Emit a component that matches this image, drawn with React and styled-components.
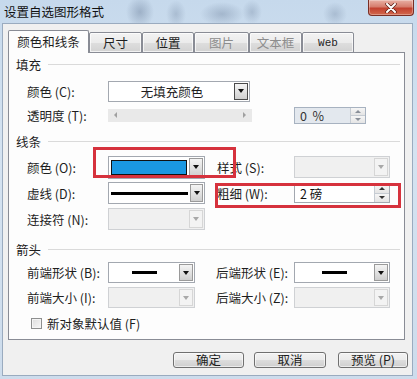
import styled, { createGlobalStyle } from 'styled-components';

const GlobalStyle = createGlobalStyle`
  html, body { margin: 0; padding: 0; }
  body {
    font-family: "Noto Sans CJK SC", "Noto Sans", sans-serif;
    font-size: 12px;
    color: #1e1e1e;
  }
  * { box-sizing: border-box; }
`;

const Window = styled.div`
  position: relative;
  width: 417px;
  height: 379px;
  display: flex;
  flex-direction: column;
  padding: 0 4px 3px 2px;
  background:
    radial-gradient(ellipse 14px 16px at 140px 12px, rgba(80, 100, 130, 0.35), transparent),
    radial-gradient(ellipse 10px 14px at 176px 14px, rgba(80, 100, 130, 0.25), transparent),
    radial-gradient(ellipse 22px 12px at 222px 14px, rgba(80, 100, 130, 0.3), transparent),
    radial-gradient(ellipse 10px 12px at 252px 12px, rgba(80, 100, 130, 0.25), transparent),
    radial-gradient(ellipse 12px 12px at 335px 14px, rgba(80, 100, 130, 0.25), transparent),
    linear-gradient(180deg, #c6d9ec 0%, #d5e3f1 40%, #cddcec 100%);
`;

const TitleBar = styled.div`
  height: 23px;
  display: flex;
  justify-content: space-between;
  align-items: flex-start;
`;

const Title = styled.div`
  padding-left: 2px;
  line-height: 23px;
  font-size: 12.5px;
  color: #111;
`;

const CloseBtn = styled.div`
  width: 46px;
  height: 16px;
  margin-right: -1px;
  display: flex;
  align-items: center;
  justify-content: center;
  border: 1px solid #7a2e24;
  border-top: none;
  border-radius: 0 0 4px 4px;
  background: linear-gradient(180deg, #e8b0a4 0%, #d67d6d 45%, #c2412f 55%, #d2694e 100%);
  box-shadow: inset 0 0 0 1px rgba(255, 255, 255, 0.3);
`;

const Client = styled.div`
  flex: 1;
  display: flex;
  flex-direction: column;
  padding: 6px 7px 0 5px;
  background: #f0f0f0;
  border: 1px solid #9aabbf;
`;

const TabRow = styled.div`
  position: relative;
  z-index: 1;
  height: 23px;
  margin-bottom: -1px;
  display: flex;
  align-items: flex-end;
`;

const Tab = styled.div`
  width: ${(p) => p.$w}px;
  height: ${(p) => (p.$active ? 23 : 21)}px;
  display: flex;
  align-items: center;
  justify-content: center;
  padding-bottom: ${(p) => (p.$active ? 2 : 0)}px;
  border: 1px solid #898c95;
  border-bottom: ${(p) => (p.$active ? 'none' : '1px solid #898c95')};
  border-radius: 2px 2px 0 0;
  background: ${(p) =>
    p.$active ? '#fdfdfd' : 'linear-gradient(180deg, #f3f3f3 0%, #ebebeb 50%, #dedede 51%, #d2d2d2 100%)'};
  box-shadow: ${(p) => (p.$active ? 'none' : 'inset 0 0 0 1px rgba(255,255,255,0.7)')};
  color: ${(p) => (p.$disabled ? '#8d8d8d' : '#1e1e1e')};
  font-family: ${(p) => (p.$mono ? '"Liberation Mono", monospace' : 'inherit')};
  font-size: ${(p) => (p.$mono ? '11px' : '12.5px')};
`;

const Panel = styled.div`
  height: 288px;
  border: 1px solid #898c95;
  background: #fdfdfd;
  padding: 0 4px 0 7px;
`;

const SectionHead = styled.div`
  height: 14px;
  margin-top: ${(p) => p.$top}px;
  display: flex;
  align-items: center;
  font-size: 12.5px;
`;

const HeadLine = styled.div`
  flex: 1;
  height: 1px;
  margin-left: 7px;
  background: #dadada;
`;

const Rows = styled.div`
  margin-top: ${(p) => p.$top}px;
  padding-left: 11px;
`;

const Row = styled.div`
  height: ${(p) => p.$h}px;
  display: flex;
  align-items: center;
`;

const Label = styled.div`
  width: ${(p) => p.$w}px;
  margin-left: ${(p) => p.$ml || 0}px;
  flex-shrink: 0;
  white-space: nowrap;
  font-size: 12.5px;
`;

const Combo = styled.div`
  width: ${(p) => p.$w}px;
  height: ${(p) => p.$h || 22}px;
  flex-shrink: 0;
  display: flex;
  padding: 1px;
  border: 1px solid ${(p) => (p.$disabled ? '#cfd1d4' : '#a3a8b0')};
  background: ${(p) => (p.$disabled ? '#f0f0f0' : '#fff')};
`;

const ComboField = styled.div`
  flex: 1;
  display: flex;
  align-items: center;
  justify-content: center;
  padding: ${(p) => (p.$pad ? '2px 2px 2px 1px' : '0')};
  font-size: 12.5px;
`;

const ComboArrow = styled.div`
  width: 14px;
  display: flex;
  align-items: center;
  justify-content: center;
  border: 1px solid ${(p) => (p.$dark ? '#4a4a4a' : p.$disabled ? '#d6d6d6' : '#9a9a9a')};
  background: ${(p) =>
    p.$disabled ? '#f3f3f3' : 'linear-gradient(180deg, #f4f4f4 0%, #e2e2e2 50%, #cfcfcf 100%)'};
  &::after {
    content: '';
    border-left: 3.5px solid transparent;
    border-right: 3.5px solid transparent;
    border-top: 4px solid ${(p) => (p.$disabled ? '#a8a8a8' : '#111')};
  }
`;

const Swatch = styled.div`
  width: 100%;
  height: 100%;
  background: #1a98e2;
  border: 1px solid #111;
`;

const LineSample = styled.div`
  width: ${(p) => p.$w}px;
  height: 3px;
  background: #000;
`;

const Slider = styled.div`
  width: 144px;
  height: 13px;
  flex-shrink: 0;
  display: flex;
  align-items: center;
  justify-content: space-between;
  padding: 0 6px;
  background: #e9e9e9;
  &::before,
  &::after {
    content: '';
    border-top: 3px solid transparent;
    border-bottom: 3px solid transparent;
  }
  &::before { border-right: 3px solid #a0a0a0; }
  &::after { border-left: 3px solid #a0a0a0; }
`;

const Spin = styled.div`
  width: ${(p) => p.$w}px;
  height: ${(p) => p.$h}px;
  margin-left: ${(p) => p.$ml || 0}px;
  flex-shrink: 0;
  display: flex;
  border: 1px solid ${(p) => (p.$muted ? '#a7b2c0' : '#a3a8b0')};
  background: ${(p) => (p.$muted ? '#e3e8ee' : '#fff')};
`;

const SpinText = styled.div`
  flex: 1;
  display: flex;
  align-items: center;
  padding-left: 5px;
  font-size: 12.5px;
  white-space: pre;
  color: ${(p) => (p.$muted ? '#333' : '#111')};
`;

const SpinBtns = styled.div`
  width: 15px;
  display: flex;
  flex-direction: column;
  border-left: 1px solid #c6ccd3;
`;

const SpinBtn = styled.div`
  flex: 1;
  display: flex;
  align-items: center;
  justify-content: center;
  background: linear-gradient(180deg, #f6f6f6, #e4e4e4);
  & + & { border-top: 1px solid #c6ccd3; }
  &::after {
    content: '';
    border-left: 3px solid transparent;
    border-right: 3px solid transparent;
    ${(p) => (p.$up ? 'border-bottom' : 'border-top')}: 3px solid ${(p) => (p.$muted ? '#8a9099' : '#333')};
  }
`;

const CheckBox = styled.div`
  width: 11px;
  height: 11px;
  margin: 0 5px 0 4px;
  border: 1px solid #8e8f8f;
  background: linear-gradient(135deg, #dcdcdc, #f7f7f7);
  box-shadow: inset 0 0 0 1px #f4f4f4;
`;

const Footer = styled.div`
  display: flex;
  justify-content: flex-end;
  margin: 12px -3px 0 0;
`;

const Button = styled.button`
  width: ${(p) => p.$w}px;
  height: 16px;
  margin-left: ${(p) => p.$ml || 0}px;
  padding: 0;
  font-family: inherit;
  font-size: 12.5px;
  line-height: 14px;
  color: #1e1e1e;
  border: 1px solid #707070;
  border-radius: 3px;
  background: linear-gradient(180deg, #f2f2f2 0%, #ebebeb 50%, #dddddd 51%, #cfcfcf 100%);
  box-shadow: inset 0 0 0 1px rgba(255, 255, 255, 0.6);
`;

const Mark = styled.div`
  position: absolute;
  left: ${(p) => p.$x}px;
  top: ${(p) => p.$y}px;
  width: ${(p) => p.$w}px;
  height: ${(p) => p.$h}px;
  border: 3px solid #d6323d;
  z-index: 5;
`;

const Dropdown = ({ w, h, disabled, dark, children }) => (
  <Combo $w={w} $h={h} $disabled={disabled}>
    <ComboField $pad={!!children && typeof children !== 'string'}>{children}</ComboField>
    <ComboArrow $disabled={disabled} $dark={dark} />
  </Combo>
);

const Spinner = ({ w, h, ml, muted, text }) => (
  <Spin $w={w} $h={h} $ml={ml} $muted={muted}>
    <SpinText $muted={muted}>{text}</SpinText>
    <SpinBtns>
      <SpinBtn $up $muted={muted} />
      <SpinBtn $muted={muted} />
    </SpinBtns>
  </Spin>
);

const tabs = [
  { label: '颜色和线条', w: 81, active: true },
  { label: '尺寸', w: 53 },
  { label: '位置', w: 52 },
  { label: '图片', w: 55, disabled: true },
  { label: '文本框', w: 53, disabled: true },
  { label: 'Web', w: 52, mono: true },
];

export default function App() {
  return (
    <>
      <GlobalStyle />
      <Window>
        <TitleBar>
          <Title>设置自选图形格式</Title>
          <CloseBtn>
            <svg width="12" height="10" viewBox="0 0 12 10">
              <path d="M2 1 L10 9 M10 1 L2 9" stroke="#5a1c14" strokeWidth="3.4" strokeLinecap="round" />
              <path d="M2 1 L10 9 M10 1 L2 9" stroke="#fff" strokeWidth="2" strokeLinecap="round" />
            </svg>
          </CloseBtn>
        </TitleBar>
        <Client>
          <TabRow>
            {tabs.map((t) => (
              <Tab key={t.label} $w={t.w} $active={t.active} $disabled={t.disabled} $mono={t.mono}>
                {t.label}
              </Tab>
            ))}
          </TabRow>
          <Panel>
            <SectionHead $top={4}>
              填充
              <HeadLine />
            </SectionHead>
            <Rows $top={8}>
              <Row $h={24}>
                <Label $w={81}>颜色 (C):</Label>
                <Dropdown w={142} h={21} dark>无填充颜色</Dropdown>
              </Row>
              <Row $h={24}>
                <Label $w={81}>透明度 (T):</Label>
                <Slider />
                <Spinner w={72} h={17} ml={42} muted text="0  %" />
              </Row>
            </Rows>

            <SectionHead $top={7}>
              线条
              <HeadLine />
            </SectionHead>
            <Rows $top={6}>
              <Row $h={26}>
                <Label $w={81}>颜色 (O):</Label>
                <Dropdown w={97} h={23}>
                  <Swatch />
                </Dropdown>
                <Label $w={77} $ml={12}>样式 (S):</Label>
                <Dropdown w={96} h={22} disabled />
              </Row>
              <Row $h={26}>
                <Label $w={81}>虚线 (D):</Label>
                <Dropdown w={97} h={22}>
                  <LineSample $w={77} />
                </Dropdown>
                <Label $w={77} $ml={12}>粗细 (W):</Label>
                <Spinner w={96} h={19} text="2 磅" />
              </Row>
              <Row $h={26}>
                <Label $w={81}>连接符 (N):</Label>
                <Dropdown w={97} h={22} disabled />
              </Row>
            </Rows>

            <SectionHead $top={10}>
              箭头
              <HeadLine />
            </SectionHead>
            <Rows $top={4}>
              <Row $h={25}>
                <Label $w={81}>前端形状 (B):</Label>
                <Dropdown w={87} h={21}>
                  <LineSample $w={25} />
                </Dropdown>
                <Label $w={78} $ml={21}>后端形状 (E):</Label>
                <Dropdown w={96} h={21}>
                  <LineSample $w={25} />
                </Dropdown>
              </Row>
              <Row $h={25}>
                <Label $w={81}>前端大小 (I):</Label>
                <Dropdown w={87} h={21} disabled />
                <Label $w={78} $ml={21}>后端大小 (Z):</Label>
                <Dropdown w={96} h={21} disabled />
              </Row>
              <Row $h={26}>
                <CheckBox />
                <Label $w={120}>新对象默认值 (F)</Label>
              </Row>
            </Rows>
          </Panel>
          <Footer>
            <Button $w={71}>确定</Button>
            <Button $w={72} $ml={10}>取消</Button>
            <Button $w={70} $ml={12}>预览 (P)</Button>
          </Footer>
        </Client>
        <Mark $x={93} $y={147} $w={143} $h={31} />
        <Mark $x={215} $y={183} $w={186} $h={25} />
      </Window>
    </>
  );
}
